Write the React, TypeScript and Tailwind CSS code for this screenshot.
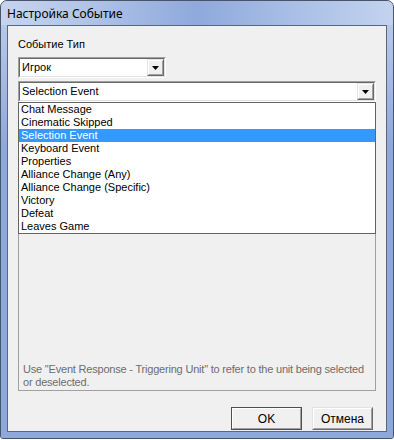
import React from "react";

const items = [
  "Chat Message",
  "Cinematic Skipped",
  "Selection Event",
  "Keyboard Event",
  "Properties",
  "Alliance Change (Any)",
  "Alliance Change (Specific)",
  "Victory",
  "Defeat",
  "Leaves Game",
];

function Arrow() {
  return (
    <svg width="7" height="4" viewBox="0 0 7 4">
      <path d="M0 0H7L3.5 4Z" fill="#000" />
    </svg>
  );
}

function DropButton() {
  return (
    <div className="w-[17px] h-[17px] border border-t-[#e3e3e3] border-l-[#e3e3e3] border-r-[#696969] border-b-[#696969]">
      <div className="w-full h-full border border-t-white border-l-white border-r-[#a0a0a0] border-b-[#a0a0a0] bg-[#f0f0f0] flex items-center justify-center">
        <Arrow />
      </div>
    </div>
  );
}

function Combo({ text, className }: { text: string; className: string }) {
  return (
    <div className={"h-[21px] border border-t-[#a0a0a0] border-l-[#a0a0a0] border-r-white border-b-white " + className}>
      <div className="h-full border border-t-[#696969] border-l-[#696969] border-r-[#e3e3e3] border-b-[#e3e3e3] bg-white flex items-center justify-between">
        <span className="pl-[2px] text-[11px] leading-[13px] text-black">{text}</span>
        <DropButton />
      </div>
    </div>
  );
}

export default function App() {
  return (
    <div
      className="w-[394px] h-[440px] bg-white"
      style={{ fontFamily: '"Liberation Sans", Arial, sans-serif' }}
    >
      <div className="w-[394px] h-[439px] border border-[#4a5468] rounded-t-[7px] rounded-b-[3px] overflow-hidden flex flex-col bg-[#8ea8db]">
        <div className="h-[24px] shrink-0 px-[6px] flex items-center bg-[linear-gradient(90deg,#c6d4ee_0%,#b3c6e8_20%,#8fa9dc_50%,#a9bfe6_75%,#c3d3ef_100%)]">
          <span
            className="text-[12px] leading-[14px] text-black pt-[2px]"
            style={{ fontFamily: '"Noto Sans", "Open Sans", sans-serif' }}
          >
            Настройка Событие
          </span>
        </div>
        <div className="flex-1 px-[6px] pb-[6px] bg-[linear-gradient(180deg,#b7c8e9_0%,#8ea8db_30%,#8ea8db_100%)]">
          <div className="h-[407px] border border-[#58667f] bg-[#f0f0f0] px-[10px] pt-[12px] flex flex-col">
            <div className="text-[11px] leading-[13px] text-black">Событие Тип</div>
            <Combo text="Игрок" className="mt-[6px] w-[148px]" />
            <div className="relative mt-[3px] z-10">
              <Combo text="Selection Event" className="w-full" />
              <div className="absolute left-0 right-0 top-full border border-[#646464] bg-white">
                {items.map((it) => (
                  <div
                    key={it}
                    className={
                      "h-[13px] pl-[2px] text-[11px] leading-[13px] whitespace-nowrap " +
                      (it === "Selection Event" ? "bg-[#3399ff] text-white" : "text-black")
                    }
                  >
                    {it}
                  </div>
                ))}
              </div>
            </div>
            <div className="mt-[1px] h-[288px] border border-[#a0a0a0] flex flex-col justify-end pl-[4px] pr-0 pb-[1px]">
              <p className="text-[11px] leading-[13px] tracking-[-0.2px] text-[#6d6d6d]">
                Use "Event Response - Triggering Unit" to refer to the unit being selected or deselected.
              </p>
            </div>
            <div className="mt-[16px] flex justify-end gap-[10px] pr-[3px]">
              <button className="w-[71px] h-[23px] border border-[#4e4e4e] bg-[#f0f0f0] p-0">
                <div className="w-full h-full border border-t-white border-l-white border-r-[#a0a0a0] border-b-[#a0a0a0] flex items-center justify-center text-[12px] text-black">
                  OK
                </div>
              </button>
              <button className="w-[61px] h-[23px] border border-t-[#e3e3e3] border-l-[#e3e3e3] border-r-[#696969] border-b-[#696969] bg-[#f0f0f0] p-0">
                <div className="w-full h-full border border-t-white border-l-white border-r-[#a0a0a0] border-b-[#a0a0a0] flex items-center justify-center text-[12px] text-black">
                  Отмена
                </div>
              </button>
            </div>
          </div>
        </div>
      </div>
    </div>
  );
}
